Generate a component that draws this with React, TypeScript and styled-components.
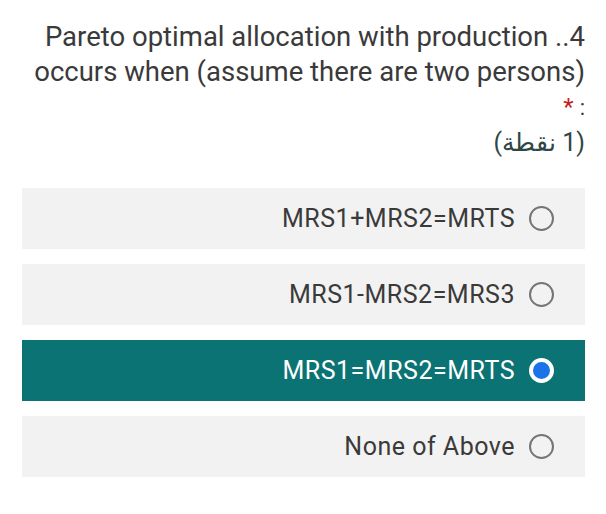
import { createGlobalStyle } from "styled-components";
import styled from "styled-components";

const GlobalStyle = createGlobalStyle`
html, body {
    margin: 0;
    padding: 0;
    background: #fff;
}
body {
    font-family: Roboto, "Noto Sans", "Liberation Sans", sans-serif;
}
`;

const Page = styled.div`
width: 606px;
height: 514px;
box-sizing: border-box;
padding: 19px 21px 0 22px;
`;

const Header = styled.div`
text-align: right;
color: #3a3a3a;
`;

const Title = styled.div`
font-size: 27.5px;
line-height: 35px;
`;

const Line = styled.span`
display: block;
`;

const Required = styled.div`
font-size: 22px;
line-height: 30px;
margin-top: 3px;
`;

const Star = styled.span`
color: #c5221f;
font-size: 24px;
margin-right: 6px;
`;

const Points = styled.div`
font-size: 25px;
line-height: 34px;
margin-top: 3px;
color: #2e4645;
`;

const Options = styled.div`
display: flex;
flex-direction: column;
gap: 15px;
margin-top: 28px;
`;

const Option = styled.div<{ $selected?: boolean }>`
height: 61px;
display: flex;
align-items: center;
justify-content: flex-end;
gap: 14px;
padding-right: 31px;
background: ${p => p.$selected ? "#0b7373" : "#f2f2f2"};
color: ${p => p.$selected ? "#fff" : "#3a3a3a"};
font-size: 25px;
letter-spacing: 0.5px;
`;

const Radio = styled.span<{ $selected?: boolean }>`
box-sizing: border-box;
width: 25px;
height: 25px;
border-radius: 50%;
flex: none;
border: ${p => p.$selected ? "4px solid #fff" : "2px solid #757575"};
background: ${p => p.$selected ? "#1a73e8" : "transparent"};
`;

const options = [
    "MRS1+MRS2=MRTS",
    "MRS1-MRS2=MRS3",
    "MRS1=MRS2=MRTS",
    "None of Above",
];

export default function App() {
    const selected = 2;
    return <>
        <GlobalStyle />
        <Page>
            <Header>
                <Title>
                    <Line>Pareto optimal allocation with production ..4</Line>
                    <Line>occurs when (assume there are two persons)</Line>
                </Title>
                <Required><Star>*</Star>:</Required>
                <Points dir="rtl">(1 نقطة)</Points>
            </Header>
            <Options>
                {options.map((o, i) => (
                    <Option key={o} $selected={i === selected}>
                        <span>{o}</span>
                        <Radio $selected={i === selected} />
                    </Option>
                ))}
            </Options>
        </Page>
    </>;
}
